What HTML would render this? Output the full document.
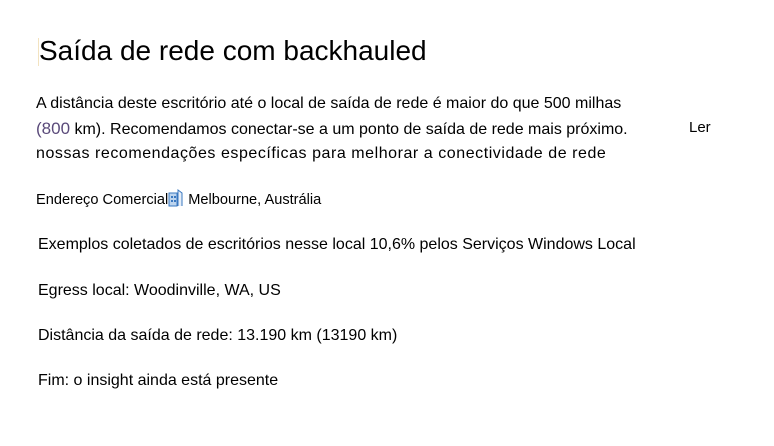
<!DOCTYPE html>
<html><head><meta charset="utf-8"><style>
body{margin:0;width:774px;height:446px;background:#fff;font-family:"Liberation Sans",sans-serif;color:#000;position:relative;overflow:hidden}
.a{position:absolute;white-space:nowrap}
</style></head><body>
<div class="a" style="left:38px;top:38px;width:1px;height:28px;background:#f3e3c0"></div>
<div class="a" style="left:39px;top:35px;font-size:28px;">Saída de rede com backhauled</div>
<div class="a" style="left:36px;top:95px;font-size:16px;">A distância deste escritório até o local de saída de rede é maior do que 500 milhas</div>
<div class="a" style="left:36px;top:119px;font-size:16px;"><span style="color:#5a4a7a;font-size:17px">(800</span> km). Recomendamos conectar-se a um ponto de saída de rede mais próximo.</div>
<div class="a" style="left:689px;top:119px;font-size:15px;">Ler</div>
<div class="a" style="left:36px;top:145px;font-size:16px;letter-spacing:0.55px">nossas recomendações específicas para melhorar a conectividade de rede</div>
<div class="a" style="left:36px;top:188px;font-size:14.6px;">Endereço Comercial<svg width="16" height="19" viewBox="0 0 16 19" style="vertical-align:-3px;margin:0 4px 0 0"><rect x="1" y="5" width="8" height="13" fill="#bcd4ee" stroke="#3a78c0"/><path d="M10 18V2l4 3v13" fill="#e6eef8" stroke="#3a78c0"/><rect x="3" y="8" width="2" height="2" fill="#3a78c0"/><rect x="6" y="8" width="2" height="2" fill="#3a78c0"/><rect x="3" y="12" width="2" height="2" fill="#3a78c0"/><rect x="6" y="12" width="2" height="2" fill="#3a78c0"/></svg>Melbourne, Austrália</div>
<div class="a" style="left:38px;top:236px;font-size:16px;">Exemplos coletados de escritórios nesse local 10,6% pelos Serviços Windows Local</div>
<div class="a" style="left:38px;top:282px;font-size:16px;">Egress local: Woodinville, WA, US</div>
<div class="a" style="left:38px;top:327px;font-size:16px;">Distância da saída de rede: 13.190 km (13190 km)</div>
<div class="a" style="left:38px;top:372px;font-size:16px;">Fim: o insight ainda está presente</div>
</body></html>
